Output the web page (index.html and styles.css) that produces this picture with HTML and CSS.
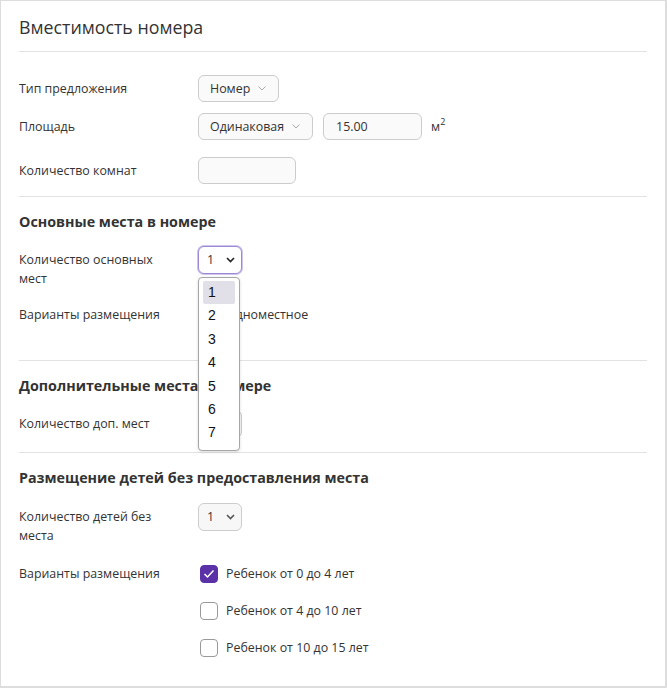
FILE: index.html
```html
<!DOCTYPE html>
<html>
<head>
    <meta charset="utf-8">
    <title>Вместимость номера</title>
    <link rel="stylesheet" href="styles.css">
</head>
<body>
    <div class="card">
        <h1 class="card-title">Вместимость номера</h1>

        <div class="section section-first">
            <div class="row row-type">
                <div class="label">Тип предложения</div>
                <div class="controls">
                    <div class="select">Номер <svg class="chevron" width="8" height="5" viewBox="0 0 8 5"><polyline points="0.5,0.5 4,4 7.5,0.5"/></svg></div>
                </div>
            </div>
            <div class="row row-area">
                <div class="label">Площадь</div>
                <div class="controls">
                    <div class="select">Одинаковая <svg class="chevron" width="8" height="5" viewBox="0 0 8 5"><polyline points="0.5,0.5 4,4 7.5,0.5"/></svg></div>
                    <div class="input input-area">15.00</div>
                    <span class="unit">м<sup>2</sup></span>
                </div>
            </div>
            <div class="row">
                <div class="label">Количество комнат</div>
                <div class="controls">
                    <div class="input input-rooms"></div>
                </div>
            </div>
        </div>

        <div class="section section-main">
            <h2 class="section-title">Основные места в номере</h2>
            <div class="row row-wrap">
                <div class="label">Количество основных мест</div>
                <div class="controls">
                    <div class="select-wrap">
                        <div class="select select-num is-focused">1 <svg class="chevron-dark" width="9" height="6" viewBox="0 0 9 6"><polyline points="1,1 4.5,4.5 8,1"/></svg></div>
                        <ul class="dropdown">
                            <li class="active">1</li>
                            <li>2</li>
                            <li>3</li>
                            <li>4</li>
                            <li>5</li>
                            <li>6</li>
                            <li>7</li>
                        </ul>
                    </div>
                </div>
            </div>
            <div class="row row-options">
                <div class="label">Варианты размещения</div>
                <div class="controls options">
                    <label class="option"><span class="checkbox"></span>Одноместное</label>
                </div>
            </div>
        </div>

        <div class="section section-extra">
            <h2 class="section-title">Дополнительные места в номере</h2>
            <div class="row">
                <div class="label">Количество доп. мест</div>
                <div class="controls">
                    <div class="select select-num">0 <svg class="chevron-dark" width="9" height="6" viewBox="0 0 9 6"><polyline points="1,1 4.5,4.5 8,1"/></svg></div>
                </div>
            </div>
        </div>

        <div class="section section-kids">
            <h2 class="section-title">Размещение детей без предоставления места</h2>
            <div class="row row-wrap">
                <div class="label">Количество детей без места</div>
                <div class="controls">
                    <div class="select select-num">1 <svg class="chevron-dark grey" width="9" height="6" viewBox="0 0 9 6"><polyline points="1,1 4.5,4.5 8,1"/></svg></div>
                </div>
            </div>
            <div class="row row-options">
                <div class="label">Варианты размещения</div>
                <div class="controls options">
                    <label class="option"><span class="checkbox checked"><svg width="12" height="10" viewBox="0 0 12 10"><polyline points="1.5,5 4.5,8 10.5,1.5"/></svg></span>Ребенок от 0 до 4 лет</label>
                    <label class="option"><span class="checkbox"></span>Ребенок от 4 до 10 лет</label>
                    <label class="option"><span class="checkbox"></span>Ребенок от 10 до 15 лет</label>
                </div>
            </div>
        </div>
    </div>
</body>
</html>
```

FILE: styles.css
```css
* { box-sizing: border-box; }
body { margin: 0; background: #fff; font-family: "Open Sans", Arial, sans-serif; font-size: 12.4px; color: #333; }

.card { width: 667px; height: 688px; border: 1px solid #ddd; border-right-width: 2px; border-bottom-width: 2px; padding: 0 18px; background: #fff; }
.card-title { margin: 0; padding: 14px 0 12px; font-size: 17.8px; font-weight: normal; line-height: 24px; color: #333; border-bottom: 1px solid #e2e2e2; }

.section { border-bottom: 1px solid #e2e2e2; }
.section:last-child { border-bottom: none; }
.section-first { padding: 23px 0 12px; }
.section-main { padding: 15px 0 32px; }
.section-extra { padding: 15px 0 14px; }
.section-kids { padding: 15px 0 0; }

.section-title { margin: 0 0 14px; font-size: 14.3px; font-weight: bold; line-height: 20px; color: #333; }
.section-kids .section-title { margin-bottom: 15px; }

.row { display: grid; grid-template-columns: 179px 1fr; margin-bottom: 11px; }
.row:last-child { margin-bottom: 0; }
.row-area { margin-bottom: 17px; }
.row-wrap { margin-bottom: 13px; }
.section-kids .row-wrap { margin-bottom: 15px; }
.label { padding: 4px 24px 0 0; line-height: 19px; }

.controls { display: flex; align-items: flex-start; gap: 10px; }

.select, .input { height: 27px; border: 1px solid #ccc; border-radius: 6px; background: #fafafa; display: flex; align-items: center; padding: 0 12px 0 11px; line-height: 18px; white-space: nowrap; }
.chevron { margin-left: 8px; fill: none; stroke: #aaa; stroke-width: 1; }
.input-area { width: 99px; padding-left: 12px; }
.input-rooms { width: 98px; }
.unit { padding-top: 4px; margin-left: -1px; line-height: 19px; }
.unit sup { font-size: 9px; line-height: 0; vertical-align: 6px; }

.select-num { width: 44px; height: 28px; padding: 0 6px 0 8px; justify-content: space-between; background: #f7f7f7; }
.chevron-dark { fill: none; stroke: #222; stroke-width: 1.6; }
.chevron-dark.grey { stroke: #555; }
.select-num.is-focused { background: #fff; border-color: #9d88d6; box-shadow: 0 0 0 1px #cfc4ec; }

/* open list of the focused select */
.select-wrap { position: relative; }
.dropdown { position: absolute; top: 31px; left: 0; z-index: 5; width: 42px; margin: 0; padding: 3px 4px 5px; list-style: none; background: #fff; border: 1px solid #a6a6a6; border-radius: 4px; box-shadow: 0 1px 3px rgba(0,0,0,0.15); font-family: "Liberation Sans", Arial, sans-serif; font-size: 14px; color: #111; }
.dropdown li { height: 23.4px; line-height: 22px; padding-left: 5px; border-radius: 2px; }
.dropdown li.active { background: #e1dfe7; }

.options { flex-direction: column; gap: 10px; }
.option { display: flex; align-items: center; gap: 8px; height: 27px; padding-left: 2px; line-height: 19px; }
.checkbox { width: 18px; height: 18px; border: 1px solid #999; border-radius: 4px; background: #fff; display: flex; align-items: center; justify-content: center; }
.checkbox.checked { background: #5a31a6; border-color: #5a31a6; }
.checkbox svg { fill: none; stroke: #fff; stroke-width: 1.5; }
```
